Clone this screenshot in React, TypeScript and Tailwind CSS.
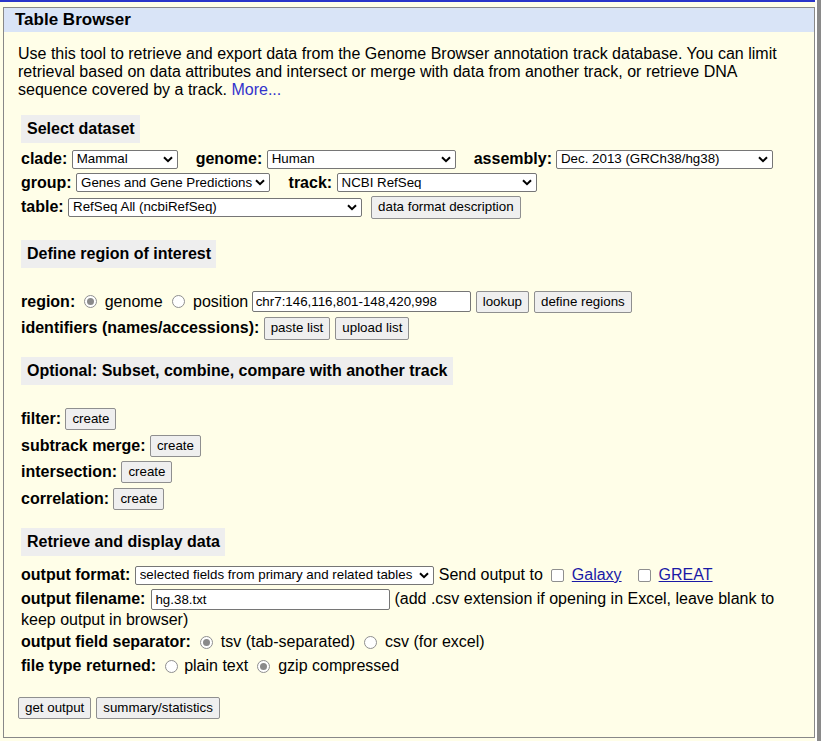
import React from "react";

function Label({ children, className = "" }: { children: React.ReactNode; className?: string }) {
  return <span className={"font-bold text-[16px] whitespace-nowrap " + className}>{children}</span>;
}

function Sel({ text, className = "" }: { text: string; className?: string }) {
  return (
    <div
      className={
        "flex items-center h-[19px] border border-[#767676] rounded-[2px] bg-white pl-[4px] pr-[4px] text-[13.33px] leading-none text-black " +
        className
      }
    >
      <span className="flex-1 overflow-hidden whitespace-nowrap">{text}</span>
      <svg width="10" height="7" viewBox="0 0 10 7" className="shrink-0 ml-[2px]">
        <path d="M1 1.2 L5 5.2 L9 1.2" stroke="#000" strokeWidth="2" fill="none" />
      </svg>
    </div>
  );
}

function Btn({ children, className = "" }: { children: React.ReactNode; className?: string }) {
  return (
    <button
      className={
        "h-[22px] px-[6px] border border-[#8f8f8f] rounded-[2px] bg-[#efefef] text-[13.33px] leading-none text-black whitespace-nowrap " +
        className
      }
    >
      {children}
    </button>
  );
}

function Radio({ checked, className = "" }: { checked?: boolean; className?: string }) {
  return (
    <span
      className={
        "w-[13px] h-[13px] rounded-full border border-[#8f8f8f] bg-white flex items-center justify-center shrink-0 " +
        className
      }
    >
      {checked ? <span className="w-[7px] h-[7px] rounded-full bg-[#8a8a8a]" /> : null}
    </span>
  );
}

function Check({ className = "" }: { className?: string }) {
  return (
    <span
      className={
        "w-[13px] h-[13px] rounded-[2px] border border-[#8f8f8f] bg-white shrink-0 " + className
      }
    />
  );
}

function Section({ children, className = "" }: { children: React.ReactNode; className?: string }) {
  return (
    <div className={"flex " + className}>
      <div className="h-[28px] flex items-center bg-[#eeeeee] pl-[6px] pr-[5px] font-bold text-[16px] whitespace-nowrap">
        {children}
      </div>
    </div>
  );
}

export default function App() {
  return (
    <div className="w-[821px] h-[741px] flex bg-white font-['Liberation_Sans',Arial,sans-serif] text-black overflow-hidden">
      <div className="w-[815px] flex flex-col bg-[#fffee8]">
        <div className="h-[2px] bg-[#2a35c9] shrink-0" />
        <div className="ml-[3px] mt-[5px] w-[812px] h-[731px] border border-[#888888] bg-[#fffee8] flex flex-col">
          <div className="h-[24px] bg-[#d9e4f7] flex items-center pl-[11px] font-bold text-[17px]">
            Table Browser
          </div>
          <div className="pl-[14px] pr-[14px] mt-[13px] text-[16px] leading-[18px]">
            Use this tool to retrieve and export data from the Genome Browser annotation track database. You can
            limit retrieval based on data attributes and intersect or merge with data from another track, or
            retrieve DNA sequence covered by a track.{" "}
            <a className="text-[#3333cc]">More...</a>
          </div>

          <div className="pl-[17px] flex flex-col text-[16px]">
            <Section className="mt-[16px]">Select dataset</Section>

            <div className="h-[24px] mt-[4px] flex items-center">
              <Label>clade:</Label>
              <Sel text="Mammal" className="w-[106px] ml-[4.4px]" />
              <Label className="ml-[18px]">genome:</Label>
              <Sel text="Human" className="w-[189px] ml-[4.4px]" />
              <Label className="ml-[18px]">assembly:</Label>
              <Sel text="Dec. 2013 (GRCh38/hg38)" className="w-[217px] ml-[4px]" />
            </div>
            <div className="h-[23px] flex items-center">
              <Label>group:</Label>
              <Sel text="Genes and Gene Predictions" className="w-[194px] ml-[4.4px]" />
              <Label className="ml-[18.5px]">track:</Label>
              <Sel text="NCBI RefSeq" className="w-[200px] ml-[4.4px]" />
            </div>
            <div className="h-[26px] flex items-center">
              <Label>table:</Label>
              <Sel text="RefSeq All (ncbiRefSeq)" className="w-[294px] ml-[4.4px]" />
              <Btn className="ml-[9px] h-[23px]">data format description</Btn>
            </div>

            <Section className="mt-[20px]">Define region of interest</Section>

            <div className="h-[27px] mt-[20px] flex items-center">
              <Label>region:</Label>
              <Radio checked className="ml-[9px]" />
              <span className="ml-[7.5px]">genome</span>
              <Radio className="ml-[9.5px]" />
              <span className="ml-[8px]">position</span>
              <input
                readOnly
                value="chr7:146,116,801-148,420,998"
                className="ml-[3.5px] w-[219px] h-[21px] border border-[#767676] rounded-[2px] bg-white px-[3px] text-[13.33px] outline-none"
              />
              <Btn className="ml-[5px]">lookup</Btn>
              <Btn className="ml-[5px]">define regions</Btn>
            </div>
            <div className="h-[26px] flex items-center">
              <Label>identifiers (names/accessions):</Label>
              <Btn className="ml-[4.4px] h-[23px]">paste list</Btn>
              <Btn className="ml-[5px] h-[23px]">upload list</Btn>
            </div>

            <Section className="mt-[16px]">Optional: Subset, combine, compare with another track</Section>

            <div className="h-[27px] mt-[20px] flex items-center">
              <Label>filter:</Label>
              <Btn className="ml-[4.4px]">create</Btn>
            </div>
            <div className="h-[27px] flex items-center">
              <Label>subtrack merge:</Label>
              <Btn className="ml-[4.4px]">create</Btn>
            </div>
            <div className="h-[26px] flex items-center">
              <Label>intersection:</Label>
              <Btn className="ml-[4.4px]">create</Btn>
            </div>
            <div className="h-[27px] flex items-center">
              <Label>correlation:</Label>
              <Btn className="ml-[4.4px]">create</Btn>
            </div>

            <Section className="mt-[16px]">Retrieve and display data</Section>

            <div className="h-[24px] mt-[7px] flex items-center">
              <Label>output format:</Label>
              <Sel text="selected fields from primary and related tables" className="w-[299px] ml-[4.4px]" />
              <span className="ml-[5px]">Send output to</span>
              <Check className="ml-[8px]" />
              <a className="ml-[8px] underline text-[#1a1aa6]">Galaxy</a>
              <Check className="ml-[16px]" />
              <a className="ml-[8px] underline text-[#1a1aa6]">GREAT</a>
            </div>
            <div className="h-[24px] flex items-center">
              <Label>output filename:</Label>
              <input
                readOnly
                value="hg.38.txt"
                className="ml-[6px] w-[239px] h-[21px] border border-[#767676] rounded-[2px] bg-white px-[3px] text-[13.33px] outline-none"
              />
              <span className="ml-[4px] whitespace-nowrap">
                (add .csv extension if opening in Excel, leave blank to
              </span>
            </div>
            <div className="h-[18px] leading-[18px]">keep output in browser)</div>
            <div className="h-[24px] mt-[1px] flex items-center">
              <Label>output field separator:</Label>
              <Radio checked className="ml-[9px]" />
              <span className="ml-[8px]">tsv (tab-separated)</span>
              <Radio className="ml-[9px]" />
              <span className="ml-[8px]">csv (for excel)</span>
            </div>
            <div className="h-[24px] flex items-center">
              <Label>file type returned:</Label>
              <Radio className="ml-[9px]" />
              <span className="ml-[6px]">plain text</span>
              <Radio checked className="ml-[9px]" />
              <span className="ml-[8px]">gzip compressed</span>
            </div>

            <div className="flex mt-[19px] -ml-[3px]">
              <Btn>get output</Btn>
              <Btn className="ml-[5px]">summary/statistics</Btn>
            </div>
          </div>
        </div>
      </div>
      <div className="w-[2px] bg-white" />
      <div className="w-[4px] bg-[#8a8a8a]" />
    </div>
  );
}
